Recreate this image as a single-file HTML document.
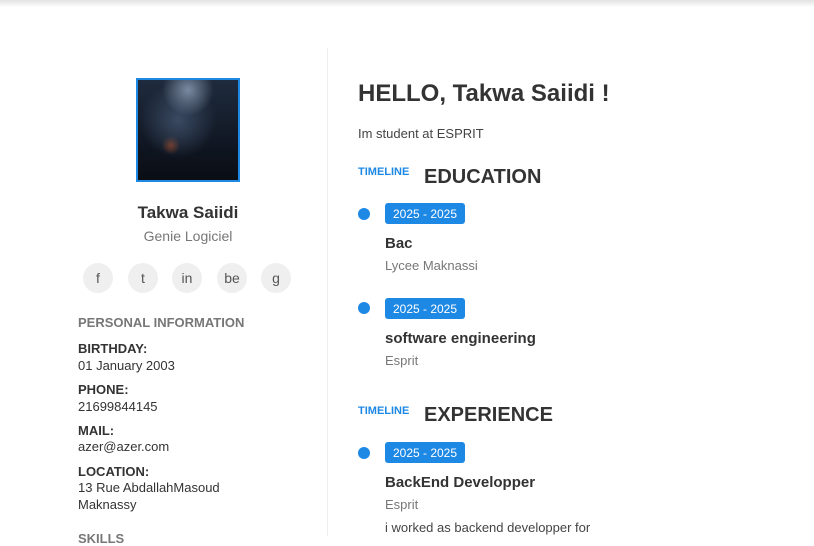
<!DOCTYPE html>
<html><head><meta charset="utf-8"><style>
*{margin:0;padding:0;box-sizing:border-box}
body{width:814px;height:536px;overflow:hidden;background:#fff;font-family:"Liberation Sans",Arial,sans-serif;color:#333;position:relative}
.a{position:absolute;white-space:nowrap}
.shadow{position:absolute;left:0;top:0;width:814px;height:7px;background:linear-gradient(#e2e2e2,#fff)}
.div{position:absolute;left:327px;top:48px;width:1px;height:488px;background:#eee}
.img{position:absolute;left:136px;top:78px;width:104px;height:104px;border:2px solid #1e88e5;
background:radial-gradient(circle at 50% 10%,#7a8aa0 0,transparent 25%),radial-gradient(circle at 40% 40%,#3a4a62 0,transparent 45%),radial-gradient(circle at 33% 65%,#8a3a1a 0,transparent 10%),linear-gradient(#1f2b3e,#0f1520 70%,#0a0d14)}
.soc{position:absolute;top:263px;width:30px;height:30px;border-radius:50%;background:#efefef;color:#555;font-size:14px;text-align:center;line-height:30px}
.lbl{font-size:13px;font-weight:bold;color:#333}
.val{font-size:13px;color:#333}
.dot{position:absolute;left:358px;width:12px;height:12px;border-radius:50%;background:#1e88e5}
.badge{position:absolute;left:385px;width:80px;height:21px;border-radius:3px;background:#1e88e5;color:#fff;font-size:12px;text-align:center;line-height:22px}
.tl{font-size:11px;font-weight:bold;color:#1e88e5}
.h2{font-size:20px;font-weight:bold;color:#333}
.t{font-size:15px;font-weight:bold;color:#333}
.s{font-size:13px;color:#777}
</style></head><body>
<div class="shadow"></div>
<div class="div"></div>
<div class="img"></div>
<div class="a" style="left:78px;width:220px;text-align:center;top:203px;font-size:17px;font-weight:bold">Takwa Saiidi</div>
<div class="a" style="left:78px;width:220px;text-align:center;top:228px;font-size:14px;color:#777">Genie Logiciel</div>
<div class="soc" style="left:83px">f</div>
<div class="soc" style="left:128px">t</div>
<div class="soc" style="left:172px">in</div>
<div class="soc" style="left:217px">be</div>
<div class="soc" style="left:261px">g</div>
<div class="a" style="left:78px;top:315px;font-size:13px;font-weight:bold;color:#777">PERSONAL INFORMATION</div>
<div class="a lbl" style="left:78px;top:341px">BIRTHDAY:</div>
<div class="a val" style="left:78px;top:358px">01 January 2003</div>
<div class="a lbl" style="left:78px;top:382px">PHONE:</div>
<div class="a val" style="left:78px;top:399px">21699844145</div>
<div class="a lbl" style="left:78px;top:423px">MAIL:</div>
<div class="a val" style="left:78px;top:439px">azer@azer.com</div>
<div class="a lbl" style="left:78px;top:464px">LOCATION:</div>
<div class="a val" style="left:78px;top:480px">13 Rue AbdallahMasoud</div>
<div class="a val" style="left:78px;top:497px">Maknassy</div>
<div class="a" style="left:78px;top:531px;font-size:13px;font-weight:bold;color:#777">SKILLS</div>

<div class="a" style="left:358px;top:80px;font-size:24px;font-weight:bold">HELLO, Takwa Saiidi !</div>
<div class="a" style="left:358px;top:126px;font-size:13px;color:#444">Im student at ESPRIT</div>
<div class="a tl" style="left:358px;top:166px">TIMELINE</div>
<div class="a h2" style="left:424px;top:166px">EDUCATION</div>
<div class="dot" style="top:208px"></div>
<div class="badge" style="top:203px">2025 - 2025</div>
<div class="a t" style="left:385px;top:235px">Bac</div>
<div class="a s" style="left:385px;top:258px">Lycee Maknassi</div>
<div class="dot" style="top:302px"></div>
<div class="badge" style="top:298px">2025 - 2025</div>
<div class="a t" style="left:385px;top:330px">software engineering</div>
<div class="a s" style="left:385px;top:353px">Esprit</div>
<div class="a tl" style="left:358px;top:405px">TIMELINE</div>
<div class="a h2" style="left:424px;top:404px">EXPERIENCE</div>
<div class="dot" style="top:447px"></div>
<div class="badge" style="top:442px">2025 - 2025</div>
<div class="a t" style="left:385px;top:474px">BackEnd Developper</div>
<div class="a s" style="left:385px;top:497px">Esprit</div>
<div class="a" style="left:385px;top:520px;font-size:13px;color:#444">i worked as backend developper for</div>
</body></html>
